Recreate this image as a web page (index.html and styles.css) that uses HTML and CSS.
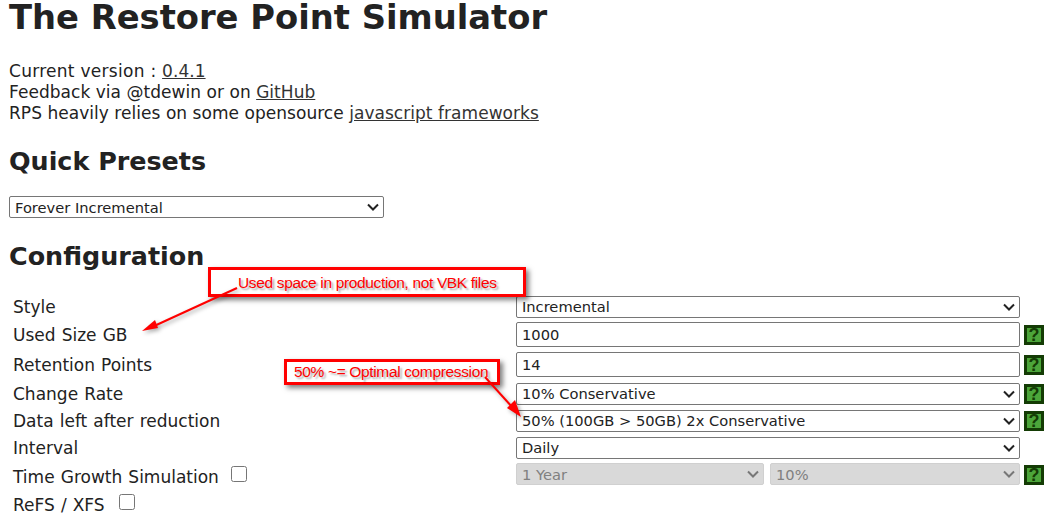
FILE: index.html
```html
<!DOCTYPE html>
<html lang="en">
<head>
<meta charset="utf-8">
<title>The Restore Point Simulator</title>
<link rel="stylesheet" href="styles.css">
</head>
<body>
<h1 class="title">The Restore Point Simulator</h1>
<p class="intro"><span class="lead">Current version : </span><a href="#">0.4.1</a><br>Feedback via @tdewin or on <a href="#">GitHub</a><br>RPS heavily relies on some opensource <a href="#">javascript frameworks</a></p>
<h2 class="preset-title">Quick Presets</h2>
<select class="preset"><option>Forever Incremental</option></select>
<h2 class="config-title">Configuration</h2>
<div class="form">
  <div class="row r-select"><label>Style</label><div class="ctl"><select><option>Incremental</option></select></div></div>
  <div class="row r-input"><label>Used Size GB</label><div class="ctl"><input type="text" value="1000"></div><span class="help">?</span></div>
  <div class="row r-input"><label>Retention Points</label><div class="ctl"><input type="text" value="14"></div><span class="help">?</span></div>
  <div class="row r-select"><label>Change Rate</label><div class="ctl"><select><option>10% Conservative</option></select></div><span class="help">?</span></div>
  <div class="row r-select"><label>Data left after reduction</label><div class="ctl"><select><option>50% (100GB &gt; 50GB) 2x Conservative</option></select></div><span class="help">?</span></div>
  <div class="row r-select"><label>Interval</label><div class="ctl"><select><option>Daily</option></select></div></div>
  <div class="row r-time"><label>Time Growth Simulation <input type="checkbox"></label><div class="ctl split"><select disabled><option>1 Year</option></select><select disabled><option>10%</option></select></div><span class="help">?</span></div>
  <div class="row r-last"><label>ReFS / XFS <input type="checkbox"></label></div>
</div>
<div class="note note-a">Used space in production, not VBK files</div>
<div class="note note-b">50% ~= Optimal compression</div>
<svg class="arrows" width="1058" height="518" viewBox="0 0 1058 518" aria-hidden="true">
  <path class="shaft" d="M237 288L152 327"/>
  <path class="head" d="M142 331L155 320L158 328Z"/>
  <path class="shaft" d="M485 377L513 408"/>
  <path class="head" d="M521 417L507 408L515 400Z"/>
</svg>
</body>
</html>
```
FILE: styles.css
```css
html, body { margin: 0; padding: 0; }
body {
  position: relative;
  width: 1058px;
  height: 518px;
  overflow: hidden;
  padding-left: 9px;
  box-sizing: border-box;
  background: #fff;
  color: #222;
  font-family: "DejaVu Sans", Verdana, sans-serif;
  font-size: 16px;
}
.title { margin: -3px 0 0; font-size: 33.75px; line-height: 41px; font-weight: 700; }
.intro { margin: 23px 0 0; font-size: 17px; line-height: 21px; letter-spacing: .04px; }
.intro a { color: #333; text-decoration: underline; }
.intro .lead { letter-spacing: .28px; }
.preset-title { margin: 22px 0 0; font-size: 25.4px; line-height: 30px; font-weight: 700; }
.preset-title + .preset { margin-top: 20px; }
select, input[type="text"] {
  font-family: "DejaVu Sans", Verdana, sans-serif;
  font-size: 14.67px;
  color: #222;
  background: #fff;
  border: 1px solid #767676;
  border-radius: 2px;
  box-sizing: border-box;
  margin: 0;
}
select {
  appearance: none;
  -webkit-appearance: none;
  padding: 0 24px 0 5px;
  background: #fff url("data:image/svg+xml,%3Csvg xmlns='http://www.w3.org/2000/svg' width='12' height='8'%3E%3Cpath d='M1 1.5l5 5 5-5' fill='none' stroke='%23222' stroke-width='2'/%3E%3C/svg%3E") no-repeat right 4px center;
}
.preset { display: block; width: 375px; height: 22px; }
.config-title { margin: 23px 0 0; font-size: 25.4px; line-height: 30px; font-weight: 700; }
.form { margin-top: 22px; display: flex; flex-direction: column; }
.row { display: flex; align-items: center; }
.row label { width: 507px; padding-left: 4px; box-sizing: border-box; font-size: 17px; word-spacing: .7px; white-space: nowrap; }
.row label input { width: 16px; height: 16px; vertical-align: 1px; }
.r-time label input { margin: 0 0 0 6px; }
.r-last label input { margin: 0 0 0 8px; vertical-align: 1px; }
.ctl { width: 504px; display: flex; gap: 6px; }
.ctl select, .ctl input { width: 100%; display: block; min-width: 0; }
.ctl input { padding: 0 5px; height: 25px; margin-bottom: 2px; }
.ctl select { height: 22px; }
.split { margin-bottom: 2px; }
.split select:first-child { flex: none; width: 248px; }
.ctl select:disabled {
  background: #d9d9d9 url("data:image/svg+xml,%3Csvg xmlns='http://www.w3.org/2000/svg' width='12' height='8'%3E%3Cpath d='M1 1.5l5 5 5-5' fill='none' stroke='%23777' stroke-width='2'/%3E%3C/svg%3E") no-repeat right 4px center;
  border-color: #d0d0d0;
  color: #808080;
  opacity: 1;
}
.r-select { height: 27px; }
.r-input { height: 30px; }
.r-time { height: 28px; }
.r-time label { padding-top: 2px; }
.r-last { height: 30px; }
.help {
  width: 20px;
  height: 20px;
  margin-left: 4px;
  box-sizing: border-box;
  background: #4ca63a;
  border: 3px solid #143c05;
  color: #143c05;
  font-family: "Liberation Sans", Arial, sans-serif;
  font-size: 18px;
  font-weight: 700;
  line-height: 14px;
  text-align: center;
}
.note {
  position: absolute;
  box-sizing: border-box;
  border: 3px solid #f00;
  background: #fff;
  color: #f00;
  font-family: "Liberation Sans", Arial, sans-serif;
  font-size: 15.5px;
  letter-spacing: -.35px;
  text-shadow: 2px 2px 2px rgba(0,0,0,.35);
  box-shadow: 3px 3px 5px rgba(0,0,0,.5);
  white-space: nowrap;
}
.note-a { left: 208px; top: 267px; width: 318px; height: 30px; line-height: 26px; padding-left: 27px; }
.note-b { left: 284px; top: 359px; width: 216px; height: 26px; line-height: 20px; padding-left: 7px; }
.arrows { position: absolute; left: 0; top: 0; pointer-events: none; filter: drop-shadow(2px 2px 2px rgba(0,0,0,.35)); }
.shaft { stroke: #f00; stroke-width: 2; fill: none; }
.head { fill: #f00; }
```
